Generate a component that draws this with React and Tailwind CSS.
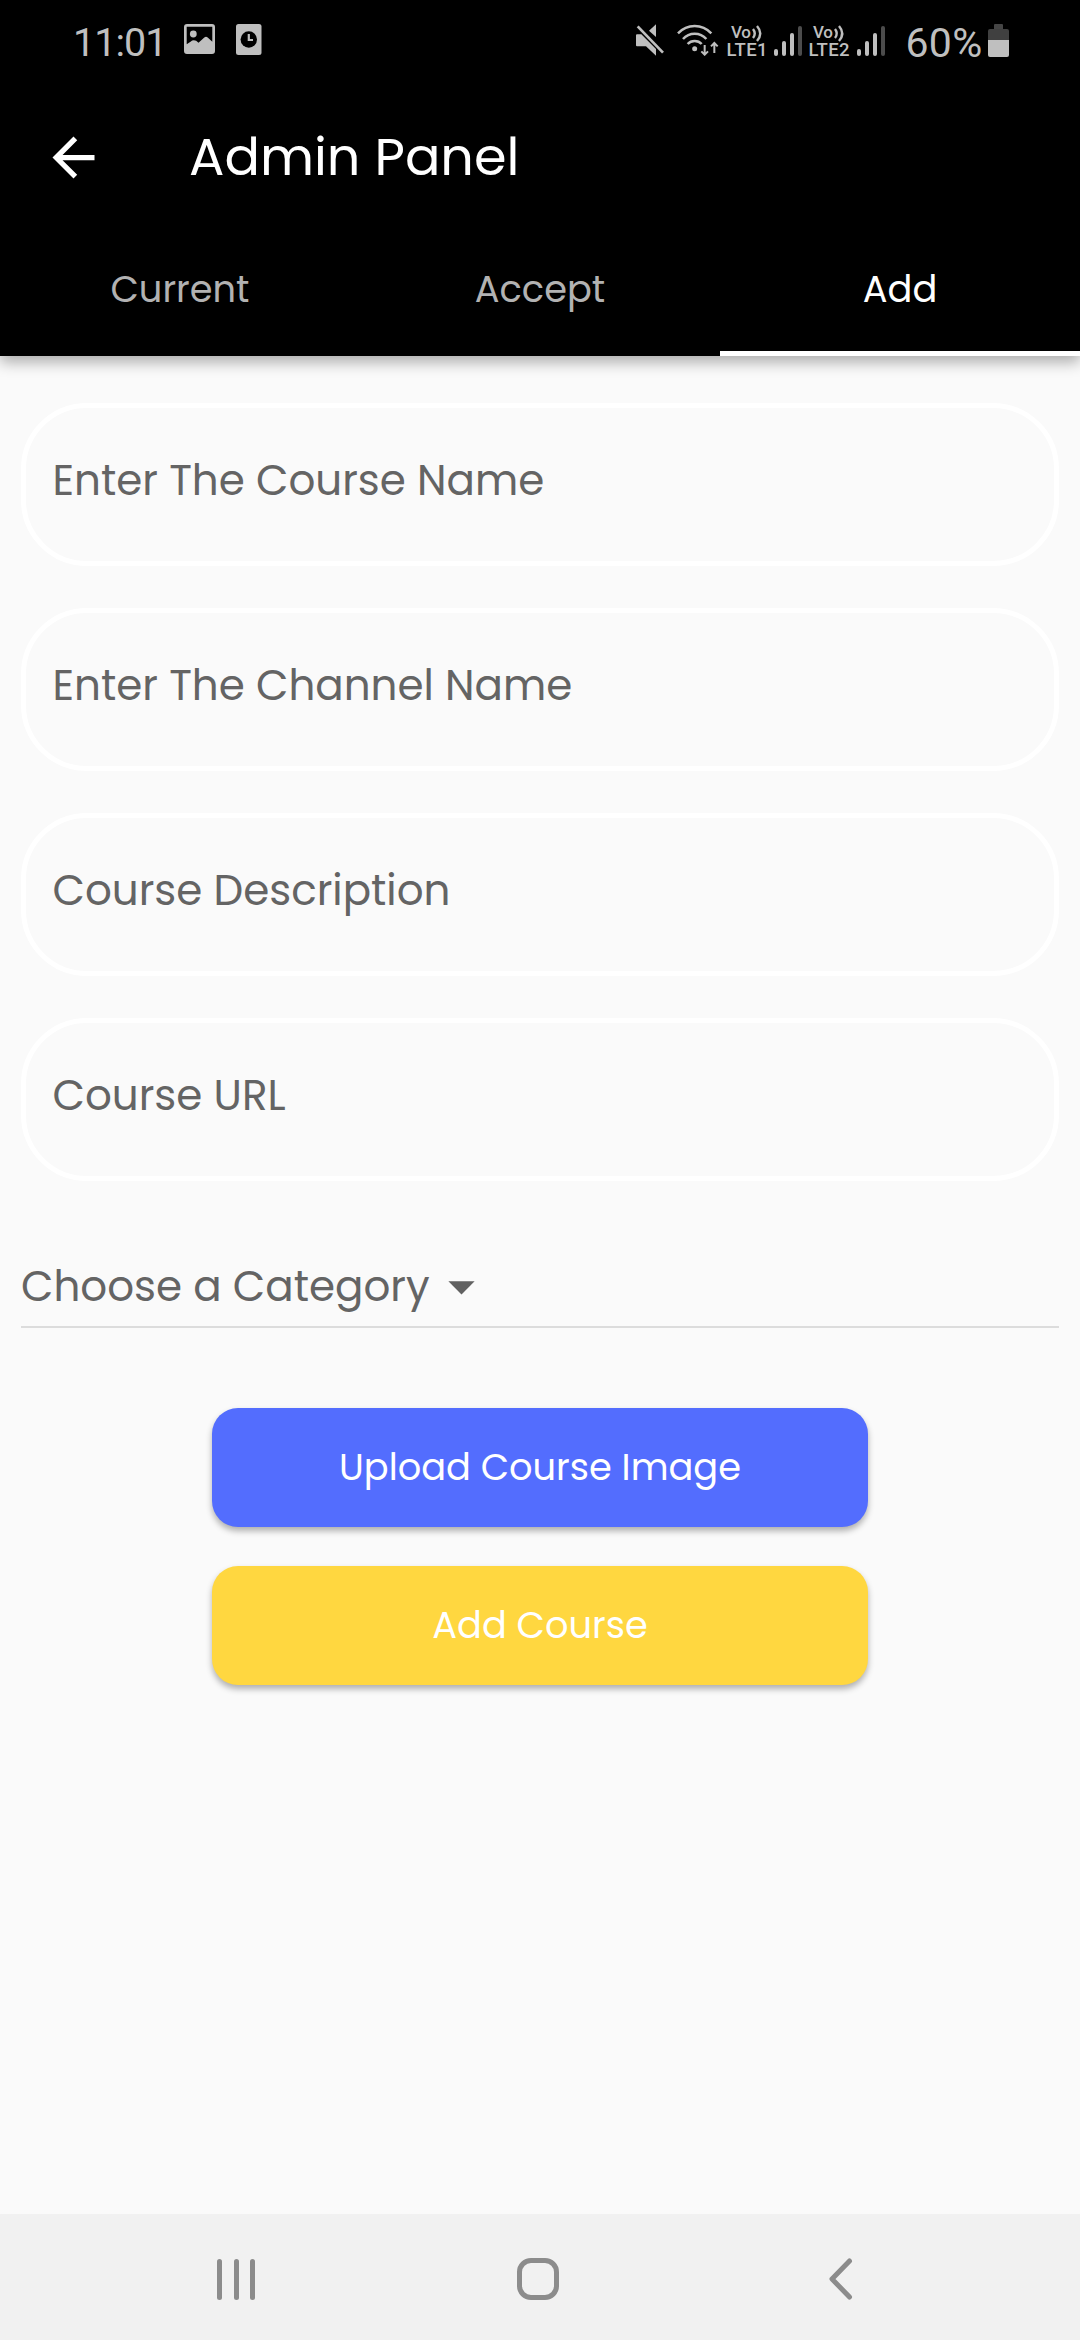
const fields = ['Enter The Course Name', 'Enter The Channel Name', 'Course Description', 'Course URL'];

const tabs = [
  { label: 'Current', active: false },
  { label: 'Accept', active: false },
  { label: 'Add', active: true },
];

function PictureIcon() {
  return (
    <svg className="h-[30px] w-[31px]" viewBox="0 0 31 30">
      <path fill="#bfbfbf" fillRule="evenodd" d="M3 0H28Q31 0 31 3V27Q31 30 28 30H3Q0 30 0 27V3Q0 0 3 0ZM2.7 2.8V20.2L6.5 17.8Q10.3 14.5 14.5 18.8L20.3 13.6Q22 12 23.7 13.6L28.3 17.8V2.8Z" />
      <circle cx="9.3" cy="10" r="3.4" fill="#bfbfbf" />
    </svg>
  );
}

function ClockCardIcon() {
  return (
    <svg className="h-[31px] w-[26px]" viewBox="0 0 26 31">
      <rect width="25.5" height="31" rx="2.5" fill="#bfbfbf" />
      <circle cx="12.8" cy="15.5" r="8.2" fill="#000" />
      <path d="M12.8 10V16H17" fill="none" stroke="#bfbfbf" strokeWidth="2.2" />
    </svg>
  );
}

function MutedIcon() {
  return (
    <svg className="h-[32px] w-[30px]" viewBox="45 43 90 96">
      <path d="M51 74H64L108 118V138L78 110H51Q48 110 48 107V77Q48 74 51 74Z" fill="#bfbfbf" />
      <path d="M108 44V82L87 63Z" fill="#bfbfbf" />
      <path d="M53 50L129 129" stroke="#bfbfbf" strokeWidth="8" />
    </svg>
  );
}

function WifiIcon() {
  return (
    <svg className="h-[32px] w-[42px]" viewBox="170 42 126 96">
      <g fill="none" stroke="#bfbfbf" strokeWidth="7.5">
        <path d="M173 70Q194 48 223 48T273 70" />
        <path d="M188 87Q202 71 223 71T258 87" />
        <path d="M202 102Q210 93 223 93T244 102" />
        <path d="M253 105V134M243 124L253 134L263 124" strokeWidth="6" />
        <path d="M282 129V99M272 109L282 99L292 109" strokeWidth="6" />
      </g>
      <circle cx="223" cy="116" r="7.5" fill="#bfbfbf" />
    </svg>
  );
}

function LteIcon({ slot }) {
  return (
    <svg className="h-[38px] w-[41px] overflow-visible" viewBox="0 0 41 38">
      <g fill="#bfbfbf" fontFamily="Roboto, sans-serif" fontWeight="500">
        <text x="4" y="14" fontSize="17" textLength="20">Vo</text>
        <text x="-0.5" y="32" fontSize="18.5" textLength="41">LTE{slot}</text>
      </g>
      <path d="M26 5Q29.5 9.5 26 14M30 2Q36.5 9.5 30 17" fill="none" stroke="#bfbfbf" strokeWidth="2.4" />
    </svg>
  );
}

function SignalIcon() {
  return (
    <div className="flex h-[30px] w-[28px] items-end justify-between">
      <div className="h-[7px] w-[4px] rounded-sm bg-[#bfbfbf]" />
      <div className="h-[15px] w-[4px] rounded-sm bg-[#bfbfbf]" />
      <div className="h-[23px] w-[4px] rounded-sm bg-[#bfbfbf]" />
      <div className="h-[30px] w-[4px] rounded-sm bg-[#4c4c4c]" />
    </div>
  );
}

function BatteryIcon() {
  return (
    <div className="flex w-[21px] flex-col items-center">
      <div className="h-[5px] w-[9px] rounded-t-[1px] bg-[#454545]" />
      <div className="h-[11px] w-full rounded-t-[2px] bg-[#404040]" />
      <div className="h-[17px] w-full rounded-b-[2px] bg-[#bfbfbf]" />
    </div>
  );
}

function StatusBar() {
  return (
    <div className="flex h-[84px] items-start pt-[24px] font-[Roboto,sans-serif] text-[39.5px] leading-[38px] text-[#bfbfbf]">
      <div className="ml-[73px] w-[111px] whitespace-nowrap tracking-[-1px]">11:01</div>
      <PictureIcon />
      <div className="ml-[21px]"><ClockCardIcon /></div>
      <div className="ml-[373px]"><MutedIcon /></div>
      <div className="ml-[11.5px]"><WifiIcon /></div>
      <div className="ml-[8.5px]"><LteIcon slot="1" /></div>
      <div className="ml-[6px] pt-[2px]"><SignalIcon /></div>
      <div className="ml-[7px]"><LteIcon slot="2" /></div>
      <div className="ml-[7px] pt-[2px]"><SignalIcon /></div>
      <div className="ml-[20.5px] w-[82.5px] whitespace-nowrap text-[41px] tracking-[0.3px]">60%</div>
      <BatteryIcon />
    </div>
  );
}

function Header() {
  return (
    <header className="relative h-[356px] bg-black shadow-[0_6px_14px_rgba(0,0,0,0.32)]">
      <StatusBar />
      <div className="flex h-[146px] items-center">
        <svg className="ml-[42px] size-[63px]" viewBox="0 0 24 24" fill="#fff">
          <path d="M20 11H7.83l5.59-5.59L12 4l-8 8 8 8 1.41-1.41L7.83 13H20v-2z" />
        </svg>
        <h1 className="ml-[84px] text-[52.5px] leading-[78px] text-white">Admin Panel</h1>
      </div>
      <nav className="grid h-[126px] grid-cols-3 text-center text-[36.75px] leading-[118px]">
        {tabs.map((tab) => (
          <div key={tab.label} className={tab.active ? 'border-b-[5px] border-white text-white' : 'text-[#b2b2b2]'}>
            {tab.label}
          </div>
        ))}
      </nav>
    </header>
  );
}

function NavBar() {
  return (
    <footer className="flex h-[126px] items-center bg-[#f1f1f1] pt-[4px]">
      <div className="ml-[217px] flex w-[38px] justify-between">
        <div className="h-[41px] w-[5px] rounded-full bg-[#8c8c8c]" />
        <div className="h-[41px] w-[5px] rounded-full bg-[#8c8c8c]" />
        <div className="h-[41px] w-[5px] rounded-full bg-[#8c8c8c]" />
      </div>
      <div className="ml-[262px] h-[42px] w-[42px] rounded-[14px] border-[5px] border-[#8c8c8c]" />
      <svg className="ml-[269px] h-[42px] w-[26px]" viewBox="0 0 26 42">
        <path d="M21.5 3L4 21L21.5 39" fill="none" stroke="#8c8c8c" strokeWidth="5" strokeLinecap="round" strokeLinejoin="round" />
      </svg>
    </footer>
  );
}

export default function App() {
  return (
    <div className="flex h-[2340px] w-[1080px] flex-col overflow-hidden bg-[#fafafa] font-[Poppins,Inter,sans-serif]">
      <Header />
      <main className="flex flex-1 flex-col px-[21px] pt-[47px] text-[42px] leading-[63px] text-[#646464]">
        <div className="flex flex-col gap-[42px]">
          {fields.map((label) => (
            <div key={label} className="flex h-[163px] items-center rounded-[66px] border-[5px] border-white pb-[8px] pl-[26.5px]">
              {label}
            </div>
          ))}
        </div>
        <div className="mt-[74px] flex h-[73px] items-start border-b-2 border-[#dcdcdc]">
          <span>Choose a Category</span>
          <svg className="size-[63px]" viewBox="0 0 24 24" fill="#616161">
            <path d="M7 10l5 5 5-5z" />
          </svg>
        </div>
        <div className="mt-[80px] flex flex-col items-center gap-[39px] text-[36.75px] text-white">
          <button className="h-[119px] w-[656px] rounded-[26px] bg-[#536dfe] pb-px shadow-[0_4px_6px_rgba(0,0,0,0.3)]">
            Upload Course Image
          </button>
          <button className="h-[119px] w-[656px] rounded-[26px] bg-[#ffd740] pb-px shadow-[0_4px_6px_rgba(0,0,0,0.3)]">
            Add Course
          </button>
        </div>
      </main>
      <NavBar />
    </div>
  );
}
